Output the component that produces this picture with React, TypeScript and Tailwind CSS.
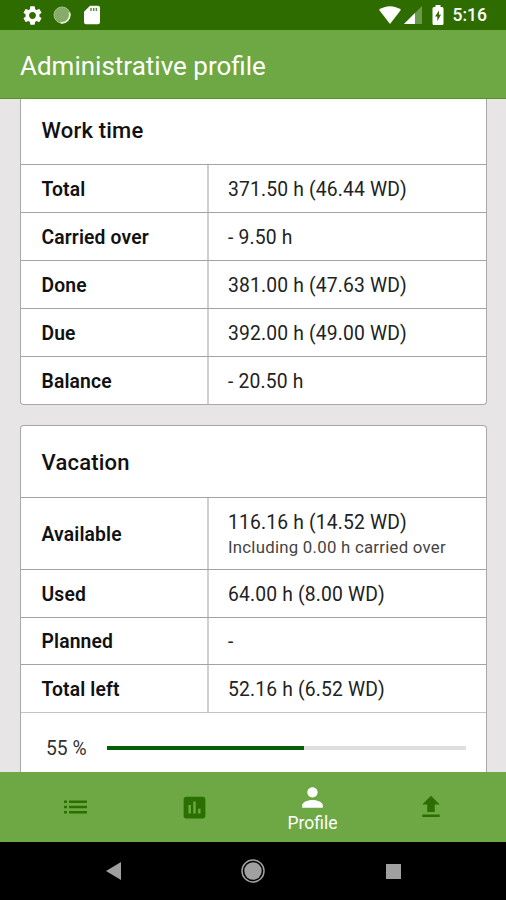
import React from 'react';
import { MdAssessment, MdFileUpload, MdPerson, MdSettings } from 'react-icons/md';

interface RowProps {
  label: string;
  value: string;
  note?: string;
  className: string;
}

const workTime = [
  { label: 'Total', value: '371.50 h (46.44 WD)', className: 'h-12' },
  { label: 'Carried over', value: '- 9.50 h', className: 'h-12' },
  { label: 'Done', value: '381.00 h (47.63 WD)', className: 'h-12' },
  { label: 'Due', value: '392.00 h (49.00 WD)', className: 'h-12' },
  { label: 'Balance', value: '- 20.50 h', className: 'h-12' },
];

const vacation = [
  { label: 'Available', value: '116.16 h (14.52 WD)', note: 'Including 0.00 h carried over', className: 'h-[72px]' },
  { label: 'Used', value: '64.00 h (8.00 WD)', className: 'h-12' },
  { label: 'Planned', value: '-', className: 'h-[47px]' },
  { label: 'Total left', value: '52.16 h (6.52 WD)', className: 'h-12' },
];

const Row: React.FC<RowProps> = ({ label, value, note, className }) => (
  <div className={`flex border-t border-[#a3a3a3] ${className}`}>
    <div className="flex w-[188px] items-center border-r-2 border-[#cfcfcf] pl-[20.5px] pt-[3px] text-[19.3px] font-semibold tracking-[0.15px]">
      {label}
    </div>
    <div className="flex flex-col justify-center pl-[19px] pt-px text-[19.3px] leading-[25px] tracking-[0.17px] text-[#222]">
      <span>{value}</span>
      {note && <span className="text-[16.8px] leading-6 tracking-[0.25px] text-[#444]">{note}</span>}
    </div>
  </div>
);

const StatusBar = () => (
  <div className="flex h-[30px] shrink-0 items-center justify-between bg-[#2f6c00] pl-[21px] pr-[19px] text-white">
    <div className="flex items-center">
      <MdSettings size={23} />
      <svg width="18" height="18" viewBox="0 0 18 18" className="ml-[9px]">
        <circle cx="9" cy="9" r="8" fill="#86ad68" stroke="#a5c191" strokeWidth="1" />
        <path d="M16.4 6.5A8 8 0 0 1 7.5 16.8" fill="none" stroke="#e8f2df" strokeWidth="1.6" />
      </svg>
      <svg width="16" height="20" viewBox="0 0 16 20" className="ml-[13px]">
        <path d="M6 .8h8A2 2 0 0 1 16 2.8v14.5a2 2 0 0 1-2 2H2a2 2 0 0 1-2-2V6.8z" fill="#fff" />
        <path d="M7 3v3M9.7 3v3M12.4 3v3" stroke="#5d8c3c" strokeWidth="1.5" />
      </svg>
    </div>
    <div className="flex items-center">
      <svg width="22" height="18" viewBox="0 0 22 18">
        <path d="M11 18 0 3.800C6.500-1.100 15.500-1.100 22 3.800z" fill="#fff" />
      </svg>
      <svg width="18" height="18" viewBox="0 0 18 18" className="ml-[3px]">
        <path d="M0 18 18 0v18z" fill="#6c9a4c" />
        <path d="M0 18 11 7v11z" fill="#fff" />
      </svg>
      <svg width="12" height="20" viewBox="0 0 12 20" className="ml-2.5">
        <path d="M3.5 0h5v2H10a1.5 1.5 0 0 1 1.5 1.5v15A1.5 1.5 0 0 1 10 20H2a1.5 1.5 0 0 1-1.5-1.5v-15A1.5 1.5 0 0 1 2 2h1.5z" fill="#fff" />
        <path d="M7 5.5 3 11.5h2.3V16L9 9.8H7z" fill="#2f6c00" />
      </svg>
      <span className="ml-[9px] pt-px text-[17.5px] font-medium leading-none">5:16</span>
    </div>
  </div>
);

export default function App() {
  return (
    <div className="flex h-[900px] w-[506px] flex-col overflow-hidden bg-[#e7e5e6] font-[Roboto,sans-serif] text-[#111]">
      <StatusBar />
      <header className="flex h-[69px] shrink-0 items-center border-b border-[#57951c] bg-[#6ea844] pl-5 pt-1 text-[26px] text-white">
        Administrative profile
      </header>

      <main className="h-[673px] shrink-0 overflow-hidden px-5">
        <section className="w-[467px] overflow-hidden rounded-b-[4px] border border-t-0 border-[#a8a8a8] bg-white">
          <h2 className="flex h-[65px] items-center pb-0.5 pl-[20.5px] text-[22px] font-medium tracking-[0.2px]">Work time</h2>
          {workTime.map((row) => (
            <Row key={row.label} {...row} />
          ))}
        </section>

        <section className="mt-5 w-[467px] overflow-hidden rounded-t-[4px] border border-b-0 border-[#a8a8a8] bg-white">
          <h2 className="flex h-[71px] items-center pl-[20.5px] pt-px text-[22px] font-medium tracking-[0.2px]">Vacation</h2>
          {vacation.map((row) => (
            <Row key={row.label} {...row} />
          ))}
          <div className="flex h-[72px] items-center border-t border-[#c4c4c4] pl-[25px] text-[19.3px] text-[#333]">
            <span className="w-[61px] pt-px">55 %</span>
            <div className="mb-0.5 h-1 w-[359px] bg-[#dedede]">
              <div className="h-1 bg-[#056005]" style={{ width: '55%' }} />
            </div>
          </div>
        </section>
      </main>

      <nav className="flex h-[70px] shrink-0 items-center justify-center bg-[#6ea844] text-[#2b6f00]">
        <div className="flex w-[119px] justify-center">
          {/* small square bullets, then three thin bars */}
          <svg width="23" height="14" viewBox="0 0 23 14" fill="currentColor">
            <path d="M0 .5h3v2.500H0zM0 5.800h3v2.500H0zM0 11.100h3v2.500H0z" />
            <path d="M5 .5h18v2.500H5zM5 5.800h18v2.500H5zM5 11.100h18v2.500H5z" />
          </svg>
        </div>
        <div className="flex w-[118px] justify-center">
          <MdAssessment size={29} />
        </div>
        <div className="flex w-[119px] flex-col items-center text-white">
          <MdPerson size={31} />
          <span className="text-[17.5px] leading-5">Profile</span>
        </div>
        <div className="flex w-[118px] justify-center">
          <MdFileUpload size={30} />
        </div>
      </nav>

      <footer className="flex h-[58px] shrink-0 items-center bg-black pl-[106px]">
        <svg width="15" height="18" viewBox="0 0 15 18">
          <path d="M0 9 15 0v18z" fill="#a0a0a0" />
        </svg>
        <svg width="24" height="24" viewBox="0 0 24 24" className="ml-[120px]">
          <circle cx="12" cy="12" r="11" fill="none" stroke="#a0a0a0" strokeWidth="1.5" />
          <circle cx="12" cy="12" r="8.7" fill="#a0a0a0" />
        </svg>
        <div className="ml-[121px] size-[15px] bg-[#a0a0a0]" />
      </footer>
    </div>
  );
}
